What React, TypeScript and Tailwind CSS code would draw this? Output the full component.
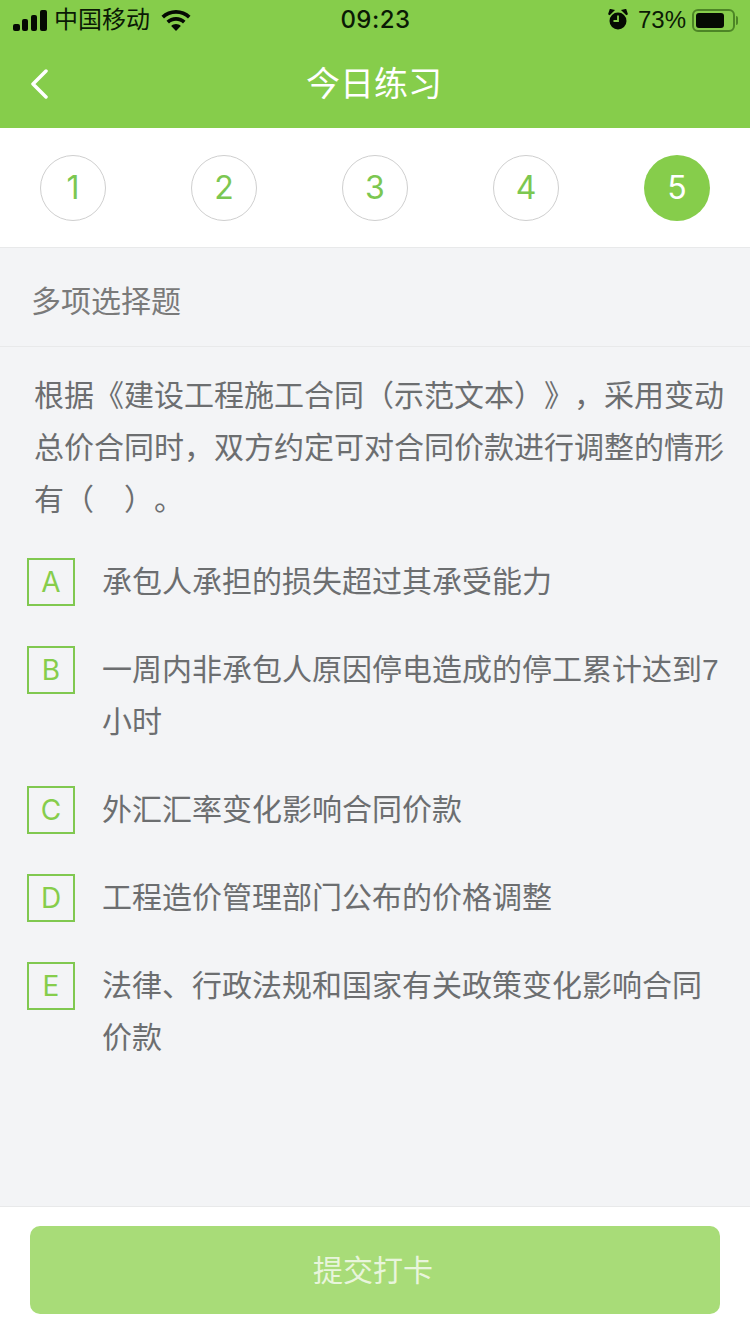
const font = "font-['Liberation_Sans','Noto_Sans_CJK_SC',sans-serif]";

const options = [
  { key: "A", text: "承包人承担的损失超过其承受能力", cls: "mt-[32px]" },
  { key: "B", text: "一周内非承包人原因停电造成的停工累计达到7小时", cls: "mt-[38px]" },
  { key: "C", text: "外汇汇率变化影响合同价款", cls: "mt-[38px]" },
  { key: "D", text: "工程造价管理部门公布的价格调整", cls: "mt-[38px]" },
  { key: "E", text: "法律、行政法规和国家有关政策变化影响合同价款", cls: "mt-[38px]" },
];

function StatusBar() {
  return (
    <div className="grid h-[40px] grid-cols-3 items-center pl-[13px] pr-[12px] text-[24px] text-[#0b1a05]">
      <div className="flex items-center">
        <svg width="35" height="21" viewBox="0 0 35 21" fill="#050a03">
          <rect x="0" y="14" width="7" height="7" rx="2" />
          <rect x="9" y="9" width="6" height="12" rx="2" />
          <rect x="18" y="5" width="6" height="16" rx="2" />
          <rect x="27" y="0" width="7" height="21" rx="2" />
        </svg>
        <span className="ml-[6px] text-[24px] leading-none">中国移动</span>
        <svg className="ml-[11px]" width="30" height="21" viewBox="0 0 30 21" fill="#050a03">
          <path d="M15 0C9.400 0 4.300 2.200 0.500 5.800L3 8.500C6.100 5.500 10.300 3.700 15 3.700S23.900 5.500 27 8.500L29.500 5.800C25.700 2.200 20.600 0 15 0Z" />
          <path d="M15 7C11.300 7 8 8.400 5.500 10.800L8 13.500C9.800 11.700 12.300 10.700 15 10.700S20.200 11.700 22 13.500L24.500 10.800C22 8.400 18.700 7 15 7Z" />
          <path d="M15 14C13.200 14 11.500 14.700 10.200 15.900L15 21L19.800 15.900C18.500 14.700 16.800 14 15 14Z" />
        </svg>
      </div>
      <span className="text-center font-['Inter',sans-serif] text-[24px] font-medium tracking-[0.5px]">09:23</span>
      <div className="flex items-center justify-end">
        <svg width="20" height="22" viewBox="0 0 20 22" fill="#050a03">
          <circle cx="10" cy="12" r="8.500" />
          <path d="M1 5.500 5 1.500 2.500 1ZM19 5.500 15 1.500 17.500 1Z" stroke="#050a03" strokeWidth="2" />
          <path d="M10 6.500V12H5.500" stroke="#86cd4b" strokeWidth="1.800" fill="none" />
        </svg>
        <span className="ml-[10px] text-[24px] leading-none">73%</span>
        <div className="ml-[6px] flex h-[23px] w-[43px] items-center rounded-[6px] border-2 border-[#4d8526] p-[2px]">
          <div className="h-full w-[28px] rounded-[3px] bg-[#050a03]" />
        </div>
        <div className="ml-[1px] h-[9px] w-[2px] rounded-r-full bg-[#4d8526]" />
      </div>
    </div>
  );
}

function Steps() {
  return (
    <div className="flex h-[120px] items-center justify-between border-b border-[#e8e9ea] bg-white px-[40px]">
      {[1, 2, 3, 4, 5].map((n) =>
        n === 5 ? (
          <div key={n} className="flex h-[66px] w-[66px] items-center justify-center rounded-full bg-[#86cd4b] font-['Inter',sans-serif] text-[32px] font-normal text-white">
            {n}
          </div>
        ) : (
          <div key={n} className="flex h-[66px] w-[66px] items-center justify-center rounded-full border border-[#cfcfcf] font-['Inter',sans-serif] text-[32px] font-normal text-[#7cc751]">
            {n}
          </div>
        )
      )}
    </div>
  );
}

export default function App() {
  return (
    <main className={`flex h-[1334px] w-[750px] flex-col overflow-hidden bg-[#f3f4f6] ${font}`}>
      <header className="h-[128px] bg-[#86cd4b]">
        <StatusBar />
        <div className="relative flex h-[88px] items-center justify-center">
          <svg className="absolute left-[30px] top-[29px]" width="18" height="30" viewBox="0 0 18 30" fill="none">
            <path d="M16 2 3 15l13 13" stroke="#fff" strokeWidth="3.500" strokeLinecap="round" strokeLinejoin="round" />
          </svg>
          <h1 className="pr-[2px] text-[34px] font-normal text-white">今日练习</h1>
        </div>
      </header>

      <Steps />

      <div className="flex h-[99px] items-center border-b border-[#e8e9ea] pl-[31px] pt-[8px] text-[30px] text-[#7a7a7a]">
        多项选择题
      </div>

      <p className="ml-[34px] mr-[26px] mt-[23px] text-[30px] leading-[52px] text-[#6c6e70] [text-spacing-trim:space-all]">
        根据《建设工程施工合同（示范文本）》，采用变动总价合同时，双方约定可对合同价款进行调整的情形有（　）。
      </p>

      <div className="flex-1 pl-[27px] pr-[30px]">
        {options.map((o) => (
          <div key={o.key} className={`flex items-start ${o.cls}`}>
            <div className="flex h-[48px] w-[48px] shrink-0 items-center justify-center border-2 border-[#80c850] font-['Inter',sans-serif] text-[28px] font-normal text-[#86cd4b]">
              {o.key}
            </div>
            <div className="ml-[27px] -mt-[2px] min-w-0 flex-1 break-all text-[30px] leading-[52px] text-[#6c6e70]">{o.text}</div>
          </div>
        ))}
      </div>

      <footer className="h-[128px] border-t border-[#e8e9ea] bg-white px-[30px] pt-[19px]">
        <button className="h-[88px] w-full rounded-[10px] bg-[#a8dc78] pr-[4px] text-[30px] text-[#e8f5dc]">提交打卡</button>
      </footer>
    </main>
  );
}
